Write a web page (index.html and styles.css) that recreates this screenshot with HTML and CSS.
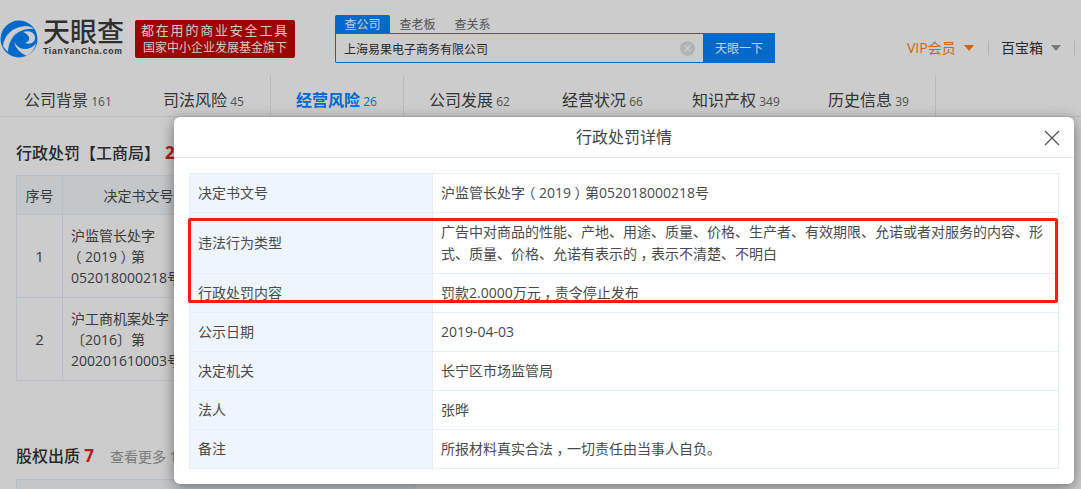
FILE: index.html
```html
<!DOCTYPE html>
<html lang="zh">
<head>
<meta charset="utf-8">
<title>行政处罚详情</title>
<link rel="stylesheet" href="styles.css">
</head>
<body>
<header class="top">
  <div class="logo">
    <svg class="logo-mark" width="38" height="38" viewBox="0 0 38 38"><circle cx="19" cy="19" r="18.5" fill="#0084ff"/><path d="M3 26C4 15 13 7 25 6c4 0 7 1 9 3-8-1-16 2-21 8-3 4-5 9-5 15-2-2-4-4-5-6z" fill="#fff"/><path d="M23 12c6-2 12 0 12 6 0 4-4 7-10 5 3-1 5-3 4-6-1-2-3-4-6-5z" fill="#fff"/><path d="M14 21c2 6 9 10 16 7 2-1 4-2 6-5-1 6-5 10-9 13-7-3-12-8-13-15z" fill="#fff"/></svg>
    <div class="logo-text"><div class="logo-cn">天眼查</div><div class="logo-en">TianYanCha.com</div></div>
  </div>
  <div class="slogan"><div class="slogan-a">都在用的商业安全工具</div><div class="slogan-b">国家中小企业发展基金旗下</div></div>
  <div class="search">
    <div class="search-tabs"><span class="stab on">查公司</span><span class="stab">查老板</span><span class="stab">查关系</span></div>
    <div class="search-row">
      <div class="search-input"><span class="query">上海易果电子商务有限公司</span><i class="clear"><svg width="15" height="15" viewBox="0 0 15 15"><circle cx="7.5" cy="7.5" r="7.5" fill="#e0e0e0"/><path d="M4.8 4.8l5.4 5.4M10.2 4.8l-5.4 5.4" stroke="#fff" stroke-width="1.6"/></svg></i></div>
      <div class="search-btn">天眼一下</div>
    </div>
  </div>
  <nav class="top-nav">
    <span class="nav-item vip">VIP会员<i class="caret"></i></span>
    <span class="nav-item box">百宝箱<i class="caret"></i></span>
  </nav>
</header>

<div class="tabs">
  <div class="tab t1">公司背景 <em>161</em></div>
  <div class="tab t2">司法风险 <em>45</em></div>
  <div class="tab t3 on">经营风险 <em>26</em></div>
  <div class="tab t4">公司发展 <em>62</em></div>
  <div class="tab t5">经营状况 <em>66</em></div>
  <div class="tab t6">知识产权 <em>349</em></div>
  <div class="tab t7">历史信息 <em>39</em></div>
</div>

<main class="content">
  <h2 class="sec-title">行政处罚【工商局】<b class="gap">2</b></h2>
  <table class="bg-table">
    <tr><th class="c1">序号</th><th class="c2">决定书文号</th><th></th></tr>
    <tr class="r"><td class="ctr">1</td><td>沪监管长处字<br><span class="cp">（</span>2019<span class="cp">）</span>第<br>052018000218号</td><td></td></tr>
    <tr class="r"><td class="ctr">2</td><td>沪工商机案处字<br>〔2016〕第<br>200201610003号</td><td></td></tr>
  </table>
  <h2 class="sec-title second">股权出质 <b>7</b><span class="more">查看更多 1</span></h2>
  <div class="stub"></div>
</main>

<div class="backdrop"></div>

<section class="modal">
  <div class="modal-head">
    <span>行政处罚详情</span>
    <svg class="close" width="16" height="16" viewBox="0 0 16 16"><path d="M1 1l14 14M15 1L1 15" stroke="#555" stroke-width="1.3" fill="none"/></svg>
  </div>
  <div class="modal-body">
    <table class="detail">
      <tr><th>决定书文号</th><td>沪监管长处字<span class="cp">（</span>2019<span class="cp">）</span>第052018000218号</td></tr>
      <tr class="tall"><th>违法行为类型</th><td>广告中对商品的性能、产地、用途、质量、价格、生产者、有效期限、允诺或者对服务的内容、形式、质量、价格、允诺有表示的<span class="cp">，</span>表示不清楚、不明白</td></tr>
      <tr><th>行政处罚内容</th><td>罚款2.0000万元<span class="cp">，</span>责令停止发布</td></tr>
      <tr><th>公示日期</th><td>2019-04-03</td></tr>
      <tr><th>决定机关</th><td>长宁区市场监管局</td></tr>
      <tr><th>法人</th><td>张晔</td></tr>
      <tr><th>备注</th><td>所报材料真实合法<span class="cp">，</span>一切责任由当事人自负。</td></tr>
    </table>
    <div class="mark"></div>
  </div>
</section>
</body>
</html>
```
FILE: styles.css
```css
* { box-sizing: border-box; }
html, body { margin: 0; padding: 0; height: 489px; overflow: hidden; }
body { background: #fff; color: #333; font-family: "Open Sans", "Noto Sans CJK SC", sans-serif; font-size: 14px; position: relative; }
i, em { font-style: normal; }
.cp { font-feature-settings: "halt"; padding: 0 3.5px; }

.top { height: 76px; background: #fff; display: flex; align-items: flex-start; box-shadow: 0 1px 2px rgba(0,0,0,.06); }
.logo { display: flex; margin: 20px 0 0 0; width: 135px; }
.logo-mark { flex: none; display: block; }
.logo-text { margin-left: 5px; color: #3b3b3b; }
.logo-cn { font-size: 27px; line-height: 24px; font-weight: 500; white-space: nowrap; height: 24px; }
.logo-en { font: bold 8.6px/10px "Liberation Sans", sans-serif; letter-spacing: .75px; margin-top: 2px; white-space: nowrap; }
.slogan { margin-top: 20px; width: 160px; height: 38px; background: #c70000; border-radius: 2px; color: #fff; text-align: center; font-size: 13px; line-height: 18px; padding-top: 1px; }
.slogan-a { letter-spacing: 1.8px; white-space: nowrap; }
.slogan-b { white-space: nowrap; font-size: 12px; }
.search { margin: 15px 0 0 40px; width: 440px; }
.search-tabs { display: flex; height: 18px; font-size: 12px; line-height: 20px; color: #666; }
.stab { width: 55px; height: 18px; text-align: center; }
.stab.on { background: #0084ff; color: #fff; border-radius: 2px 2px 0 0; }
.search-row { display: flex; height: 30px; }
.search-input { width: 368px; border: 1px solid #0084ff; border-right: 0; background: #fff; border-radius: 0 0 0 2px; display: flex; align-items: center; justify-content: space-between; padding: 0 8px; font-size: 12px; color: #333; }
.query { padding-top: 2px; }
.clear { display: block; height: 15px; }
.clear svg { display: block; }
.search-btn { width: 72px; background: #0084ff; color: #fff; text-align: center; font-size: 12px; line-height: 31px; }
.top-nav { display: flex; margin: 38px 0 0 132px; font-size: 14px; line-height: 20px; }
.nav-item { display: flex; align-items: center; white-space: nowrap; height: 14px; margin-top: 3px; border-right: 1px solid #e2e2e2; }
.vip { color: #ff7f1e; width: 82px; }
.box { color: #333; padding-left: 12px; width: 86px; }
.caret { width: 0; height: 0; margin-left: 8px; border: 5px solid transparent; border-top: 6px solid #ff7f1e; border-bottom: 0; }
.box .caret { border-top-color: #999; }

.tabs { height: 41px; display: flex; font-size: 16px; color: #444; border-bottom: 1px solid #eee; background: #fff; }
.tab { line-height: 49px; white-space: nowrap; height: 41px; padding-left: 25px; }
.tab em { font-size: 12px; color: #666; margin-left: -1px; }
.t1 { width: 139px; padding-left: 24px; }
.t2 { width: 132px; padding-left: 24px; border-right: 1px solid #e8e8e8; }
.t3 { width: 133px; border-right: 1px solid #e8e8e8; }
.t4 { width: 133px; }
.t5 { width: 130px; }
.t6 { width: 136px; }
.t7 { width: 133px; border-right: 1px solid #e8e8e8; }
.tab.on { color: #0084ff; font-weight: 700; }
.tab.on em { color: #0084ff; font-weight: 400; }

.content { padding: 0 0 0 16px; }
.sec-title { margin: 24px 0 0; font-size: 16px; line-height: 24px; font-weight: 500; color: #333; }
.sec-title b { color: #e1251b; font-weight: 700; font-size: 17px; }
.sec-title b.gap { margin-left: 5px; }
.sec-title.second { margin-top: 63px; }
.more { font-size: 14px; font-weight: 400; color: #999; margin-left: 16px; }
.bg-table { border-collapse: collapse; margin-top: 10px; width: 400px; table-layout: fixed; font-size: 14px; color: #4a4a4a; }
.bg-table th, .bg-table td { border: 1px solid #e4eff9; }
.bg-table th { background: #f4f9fd; font-weight: 400; height: 39px; }
.c1 { width: 46px; }
.c2 { width: 152px; }
.bg-table td { padding: 0 8px; line-height: 21px; white-space: nowrap; }
.bg-table tr.r td { height: 83px; }
.bg-table td.ctr { text-align: center; font-size: 15px; padding: 0; }
.stub { margin-top: 10px; width: 400px; height: 30px; background: #f4f9fd; border: 1px solid #e4eff9; }

.backdrop { position: absolute; inset: 0; background: rgba(0,0,0,.2); }
.modal { position: absolute; left: 174px; top: 117px; width: 900px; height: 367px; background: #fff; border-radius: 6px; box-shadow: 0 3px 14px rgba(0,0,0,.45); }
.modal-head { height: 41px; border-bottom: 1px solid #e8e8e8; text-align: center; font-size: 16px; line-height: 41px; color: #444; position: relative; }
.close { position: absolute; right: 14px; top: 13px; }
.modal-body { padding: 15px; position: relative; }
.detail { width: 870px; border-collapse: collapse; table-layout: fixed; font-size: 14px; color: #4a4a4a; }
.detail th, .detail td { border: 1px solid #e4eff9; height: 39px; line-height: 22.5px; text-align: left; vertical-align: middle; padding: 0 8px; font-weight: 400; }
.detail th { width: 243px; background: #eef5fc; }
.detail .tall th, .detail .tall td { height: 61px; }
.mark { position: absolute; left: 14px; top: 60px; width: 870px; height: 85px; border: 3px solid #fd1a14; border-radius: 2px; }
```
